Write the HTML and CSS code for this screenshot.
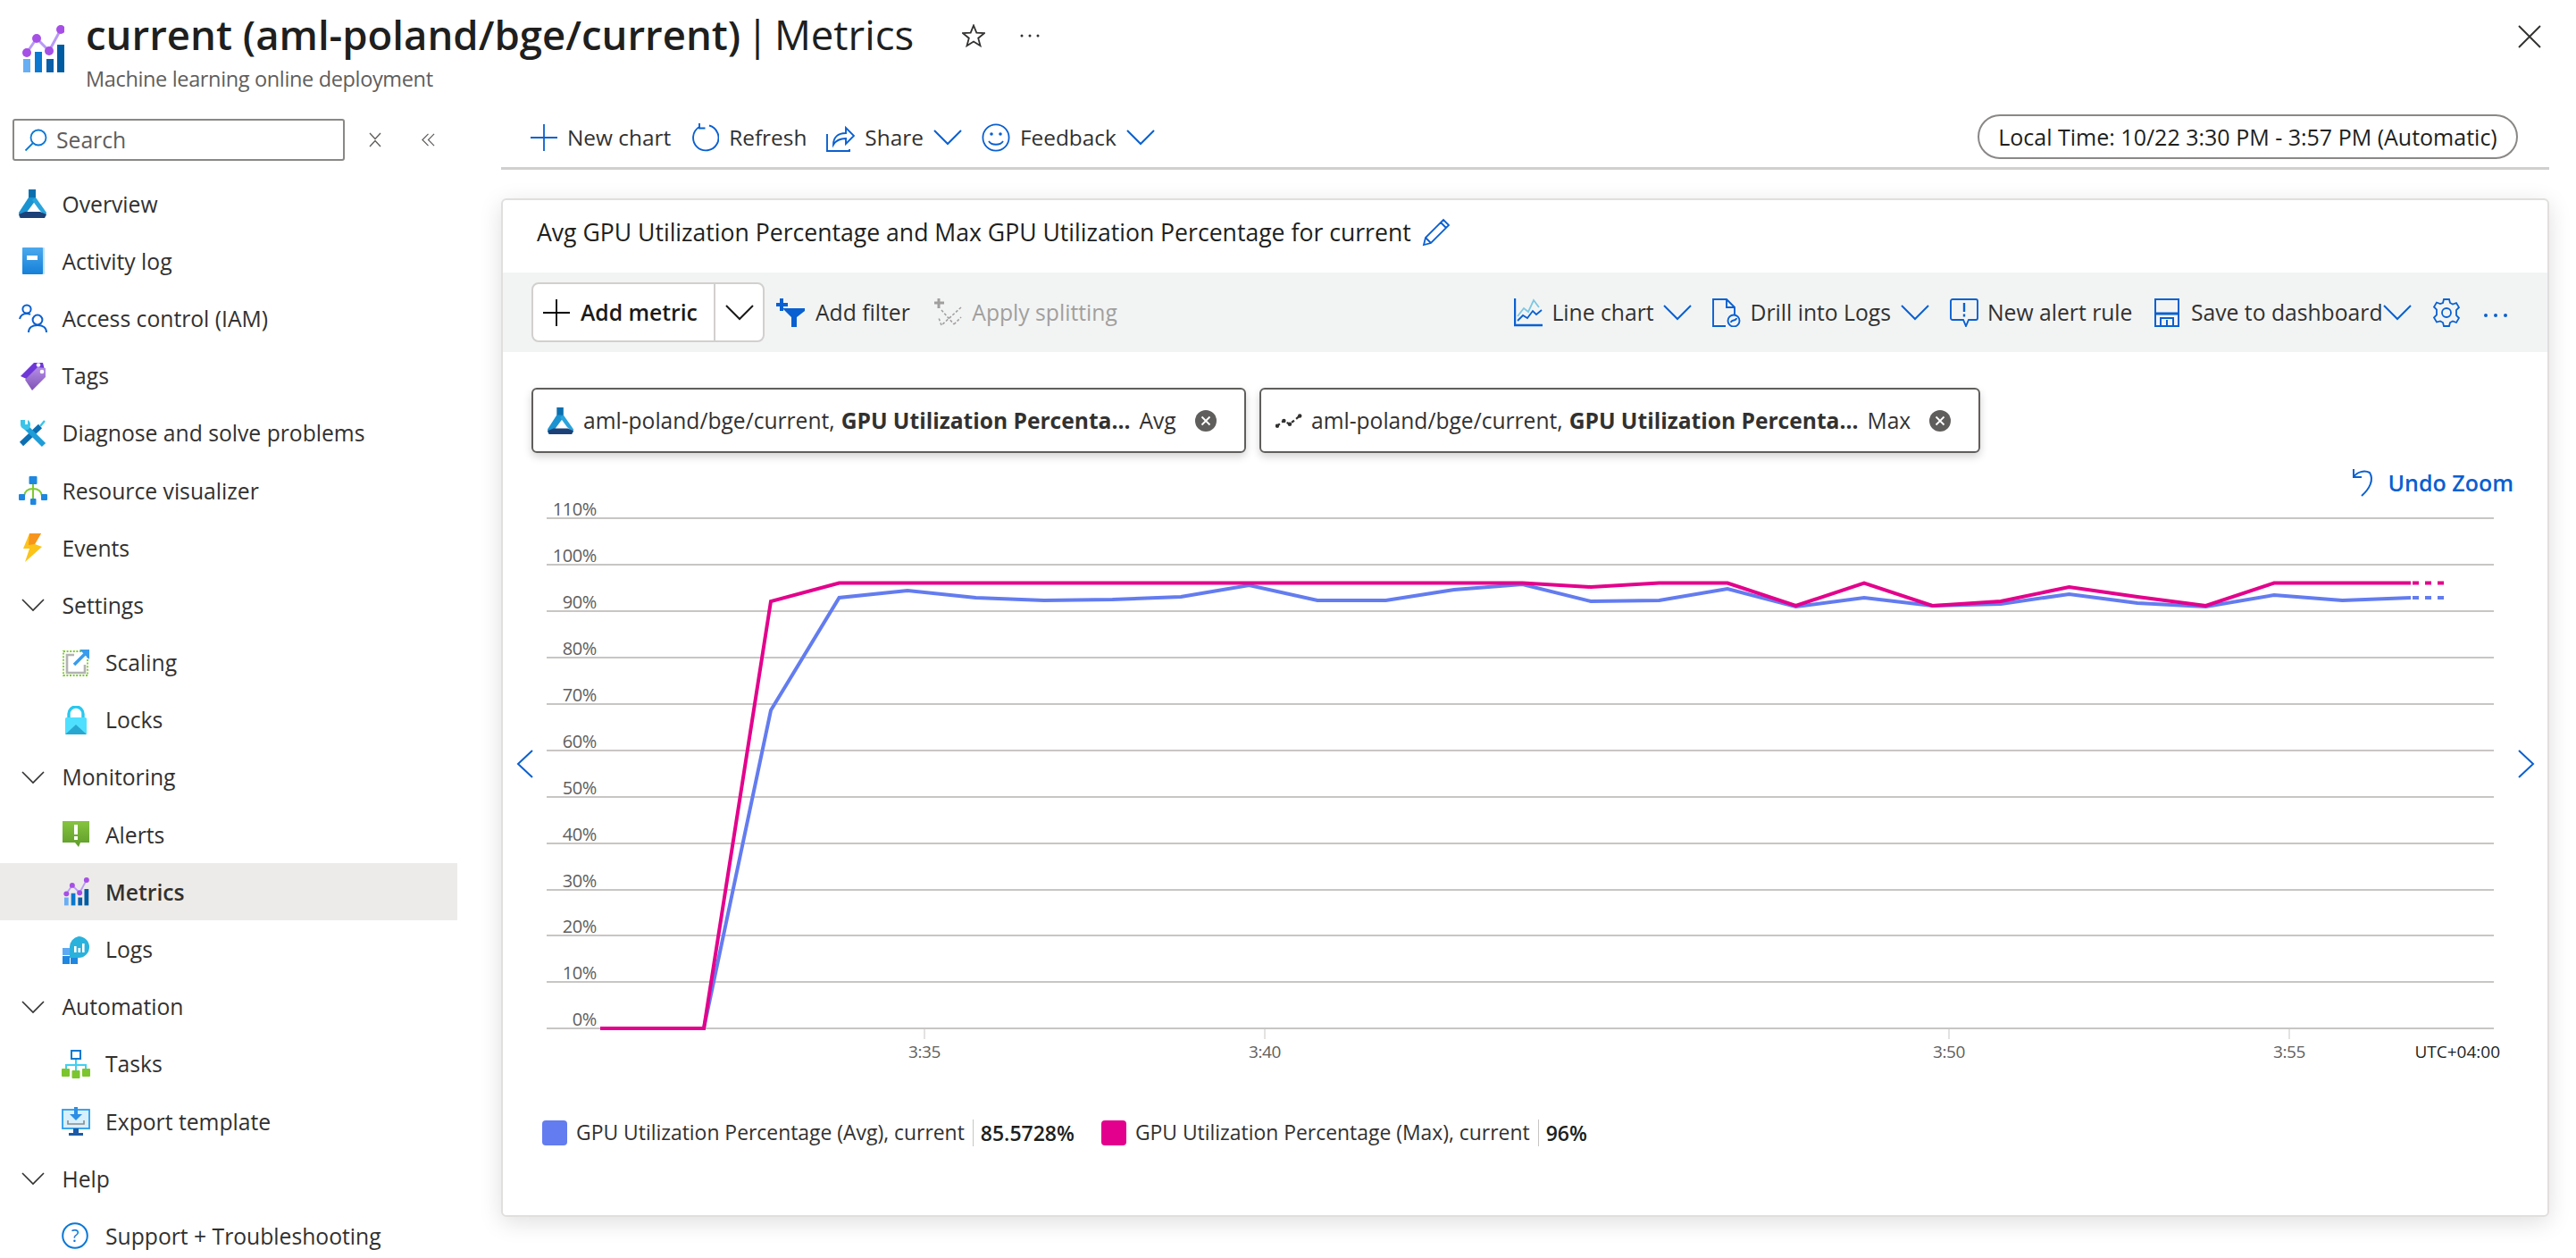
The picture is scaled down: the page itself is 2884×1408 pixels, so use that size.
FILE: index.html
```html
<!DOCTYPE html>
<html lang="en">
<head>
    <meta charset="UTF-8">
    <title>current (aml-poland/bge/current) | Metrics</title>
    <link rel="stylesheet" href="styles.css">
</head>
<body>
    <header class="blade-header">
        <svg class="blade-icon" viewBox="0 0 48 54">
            <rect x="2" y="38" width="8" height="15" fill="#68aef4"/>
            <rect x="15" y="30" width="8" height="23" fill="#0a78d0"/>
            <rect x="28" y="38" width="8" height="15" fill="#0a5fa8"/>
            <rect x="40" y="22" width="8" height="31" fill="#005ba1"/>
            <polyline points="6,31 17,15 31,29 44,5" fill="none" stroke="#b99af8" stroke-width="3"/>
            <circle cx="6" cy="31" r="5" fill="#a64fe6"/>
            <circle cx="17" cy="15" r="5" fill="#a64fe6"/>
            <circle cx="31" cy="29" r="5" fill="#a64fe6"/>
            <circle cx="44" cy="5" r="5" fill="#a64fe6"/>
        </svg>
        <div class="blade-titles">
            <h1 class="blade-title"><strong>current (aml-poland/bge/current)</strong> | Metrics</h1>
            <p class="blade-subtitle">Machine learning online deployment</p>
        </div>
        <svg class="star-icon" viewBox="0 0 26 26"><path d="M13 1.500l3.300 8.200 8.700.5-6.800 5.500 2.300 8.500L13 19.500l-7.500 4.700 2.300-8.500L1 10.200l8.700-.5z" fill="none" stroke="#323130" stroke-width="1.800"/></svg>
        <svg class="header-dots" viewBox="0 0 24 4"><circle cx="3" cy="2" r="1.500" fill="#323130"/><circle cx="12" cy="2" r="1.500" fill="#323130"/><circle cx="21" cy="2" r="1.500" fill="#323130"/></svg>
        <svg class="close-icon" viewBox="0 0 26 26"><path d="M1 1l24 24M25 1L1 25" stroke="#323130" stroke-width="1.900"/></svg>
    </header>

    <div class="blade-body">
        <aside class="sidebar">
            <div class="search-row">
                <div class="search-box">
                    <svg class="search-icon" viewBox="0 0 26 26"><circle cx="16" cy="10" r="8.500" fill="none" stroke="#0a78d6" stroke-width="1.800"/><path d="M10 16L1.500 24.500" stroke="#0a78d6" stroke-width="1.800"/></svg>
                    <span>Search</span>
                </div>
                <svg class="sidebar-tool" viewBox="0 0 14 17"><path d="M1 1l6 6.500L13 1M1 16l6-6.500L13 16" fill="none" stroke="#605e5c" stroke-width="1.400"/></svg>
                <svg class="sidebar-tool collapse" viewBox="0 0 16 18"><path d="M8 2L1 9l7 7M15 2L8 9l7 7" fill="none" stroke="#605e5c" stroke-width="1.300"/></svg>
            </div>

            <nav class="nav-list">
                <a class="nav-item">
                    <svg class="nav-icon" viewBox="0 0 32 32">
                        <rect x="11" y="0" width="8" height="11" fill="#0b6fae"/>
                        <polygon points="11,9 19,9 19,12 8,27 1,32 0,26" fill="#1b93d1"/>
                        <polygon points="19,9 31,26 30,30 23,23 15,12" fill="#2aa4dc"/>
                        <polygon points="10,25 16,18 21,25" fill="#fff"/>
                        <polygon points="7,25 24,25 31,28 29,32 2,32 0,28" fill="#1c4178"/>
                    </svg>
                    Overview
                </a>
                <a class="nav-item">
                    <svg class="nav-icon" viewBox="0 0 32 32">
                        <defs><linearGradient id="bookFill" x1="0" y1="0" x2="0" y2="1"><stop offset="0" stop-color="#4aa9ee"/><stop offset="1" stop-color="#1580d8"/></linearGradient></defs>
                        <rect x="4" y="1" width="25" height="30" rx="1" fill="#bfe0f8"/>
                        <rect x="4" y="1" width="23" height="30" rx="1" fill="url(#bookFill)"/>
                        <rect x="9" y="10" width="12" height="5" fill="#fff"/>
                    </svg>
                    Activity log
                </a>
                <a class="nav-item">
                    <svg class="nav-icon" viewBox="0 0 32 32" fill="none" stroke="#0a60d0" stroke-width="2">
                        <circle cx="9" cy="6" r="4.600"/>
                        <path d="M1 17c1-4 4-6 8-6 2 0 3 .4 4 1"/>
                        <circle cx="21" cy="18" r="5.400"/>
                        <path d="M11 32c0-5 4-8 10-8s10 3 10 8"/>
                    </svg>
                    Access control (IAM)
                </a>
                <a class="nav-item">
                    <svg class="nav-icon" viewBox="0 0 32 32">
                        <defs><linearGradient id="tagFill" x1="0" y1="0" x2="0" y2="1"><stop offset="0" stop-color="#b58ee6"/><stop offset="1" stop-color="#7f51b5"/></linearGradient></defs>
                        <polygon points="2,16 17,1 27,1 29,9 15,22" fill="#6f37d8"/>
                        <polygon points="7,20 21,6 30,7 30,17 15,32" fill="url(#tagFill)"/>
                        <circle cx="22" cy="3.500" r="2.300" fill="#fff"/>
                        <circle cx="26" cy="11" r="2.300" fill="#fff"/>
                    </svg>
                    Tags
                </a>
                <a class="nav-item">
                    <svg class="nav-icon" viewBox="0 0 32 32">
                        <path d="M3 28L24 8" stroke="#0d6fb2" stroke-width="6"/>
                        <path d="M24 8l5-6" stroke="#3bc4ea" stroke-width="2.400"/>
                        <path d="M8 9l20 20" stroke="#1e9dd8" stroke-width="6"/>
                        <path d="M2 1v5c0 4 4 6 8 6 2-1 3-3 3-6 0-2-1-4-3-5v5H7V1z" fill="#3bc4ea"/>
                    </svg>
                    Diagnose and solve problems
                </a>
                <a class="nav-item">
                    <svg class="nav-icon" viewBox="0 0 32 32">
                        <path d="M16 8v18M6 22c1-6 5-8 10-8s9 2 10 8" fill="none" stroke="#7fcb2f" stroke-width="2"/>
                        <rect x="11.500" y="0" width="9" height="9" rx="1" fill="#1f87e0"/>
                        <rect x="0" y="20" width="7" height="7" rx="1" fill="#1f87e0"/>
                        <rect x="25" y="20" width="7" height="7" rx="1" fill="#1f87e0"/>
                        <rect x="13" y="25" width="6.500" height="7" rx="1" fill="#1f87e0"/>
                    </svg>
                    Resource visualizer
                </a>
                <a class="nav-item">
                    <svg class="nav-icon" viewBox="0 0 32 32">
                        <polygon points="12,0 25,0 18,12 26,15 7,32 12,17 5,17" fill="#fcc419"/>
                        <polygon points="12,0 25,0 18,12 11,13" fill="#f7941d"/>
                    </svg>
                    Events
                </a>
                <a class="nav-item group">
                    <svg class="nav-icon" viewBox="0 0 32 32"><path d="M4 10l12 12 12-12" fill="none" stroke="#323130" stroke-width="1.600"/></svg>
                    Settings
                </a>
                <a class="nav-item child">
                    <svg class="nav-icon" viewBox="0 0 32 32">
                        <rect x="2" y="3" width="27" height="27" fill="none" stroke="#7fcb2f" stroke-width="1.800" stroke-dasharray="2 1.600"/>
                        <path d="M14 7H6v20h20v-9" fill="none" stroke="#b3b3b3" stroke-width="2.600"/>
                        <path d="M14 18L28 4" stroke="#3a9bec" stroke-width="3.600"/>
                        <polygon points="20,1 31,1 31,12" fill="#3a9bec"/>
                    </svg>
                    Scaling
                </a>
                <a class="nav-item child">
                    <svg class="nav-icon" viewBox="0 0 32 32">
                        <path d="M8 15V9a8 8 0 0116 0v6" fill="none" stroke="#28c8ef" stroke-width="3.400"/>
                        <rect x="4" y="13" width="24" height="19" rx="1.500" fill="#50e0ff"/>
                        <polygon points="4,32 16,21 28,32" fill="#28a8d0"/>
                    </svg>
                    Locks
                </a>
                <a class="nav-item group">
                    <svg class="nav-icon" viewBox="0 0 32 32"><path d="M4 10l12 12 12-12" fill="none" stroke="#323130" stroke-width="1.600"/></svg>
                    Monitoring
                </a>
                <a class="nav-item child">
                    <svg class="nav-icon" viewBox="0 0 32 32">
                        <defs><linearGradient id="alertFill" x1="0" y1="0" x2="0" y2="1"><stop offset="0" stop-color="#86c440"/><stop offset="1" stop-color="#5e9c2a"/></linearGradient></defs>
                        <polygon points="1,1 31,1 31,25 21,25 19,30 15,25 1,25" fill="url(#alertFill)"/>
                        <rect x="14" y="5" width="4" height="11" fill="#fff"/>
                        <rect x="14" y="18" width="4" height="4" fill="#fff"/>
                    </svg>
                    Alerts
                </a>
                <a class="nav-item child active">
                    <svg class="nav-icon" viewBox="0 0 48 54">
                        <rect x="2" y="38" width="8" height="15" fill="#68aef4"/>
                        <rect x="15" y="30" width="8" height="23" fill="#0a78d0"/>
                        <rect x="28" y="38" width="8" height="15" fill="#0a5fa8"/>
                        <rect x="40" y="22" width="8" height="31" fill="#005ba1"/>
                        <polyline points="6,31 17,15 31,29 44,5" fill="none" stroke="#b99af8" stroke-width="3"/>
                        <circle cx="6" cy="31" r="5" fill="#a64fe6"/>
                        <circle cx="17" cy="15" r="5" fill="#a64fe6"/>
                        <circle cx="31" cy="29" r="5" fill="#a64fe6"/>
                        <circle cx="44" cy="5" r="5" fill="#a64fe6"/>
                    </svg>
                    Metrics
                </a>
                <a class="nav-item child">
                    <svg class="nav-icon" viewBox="0 0 32 32">
                        <rect x="1" y="14" width="8" height="8" fill="#5ea9f3"/>
                        <rect x="1" y="23" width="8" height="9" fill="#1f87e0"/>
                        <rect x="10" y="23" width="8" height="9" fill="#1f87e0"/>
                        <path d="M19 1a12 12 0 010 24H9V13A12 12 0 0119 1z" fill="#2ab2dc"/>
                        <rect x="14" y="12" width="2.600" height="7" fill="#fff"/>
                        <rect x="18.500" y="14" width="2.600" height="5" fill="#fff"/>
                        <rect x="23" y="9" width="2.600" height="10" fill="#fff"/>
                    </svg>
                    Logs
                </a>
                <a class="nav-item group">
                    <svg class="nav-icon" viewBox="0 0 32 32"><path d="M4 10l12 12 12-12" fill="none" stroke="#323130" stroke-width="1.600"/></svg>
                    Automation
                </a>
                <a class="nav-item child">
                    <svg class="nav-icon" viewBox="0 0 32 32">
                        <path d="M16 10v13M5 22v-5h22v5" fill="none" stroke="#40d0f0" stroke-width="2"/>
                        <rect x="11" y="1" width="10" height="9" fill="#fff" stroke="#0a78d0" stroke-width="2"/>
                        <rect x="0" y="21" width="9" height="9" rx="1" fill="#7cc52c"/>
                        <rect x="11.500" y="23" width="9" height="9" rx="1" fill="#7cc52c"/>
                        <rect x="23" y="21" width="9" height="9" rx="1" fill="#7cc52c"/>
                    </svg>
                    Tasks
                </a>
                <a class="nav-item child">
                    <svg class="nav-icon" viewBox="0 0 32 32">
                        <rect x="1" y="3" width="30" height="21" fill="#d8f0fb" stroke="#2b9cea" stroke-width="1.800"/>
                        <path d="M16 0v10" stroke="#2b8fe6" stroke-width="4"/>
                        <polygon points="9,8 23,8 16,15" fill="#2b8fe6"/>
                        <path d="M7 15v4h18v-4" fill="none" stroke="#8a8a8a" stroke-width="1.600"/>
                        <rect x="13" y="24" width="6" height="5" fill="#1c5aa6"/>
                        <rect x="8" y="29" width="16" height="3" fill="#1c5aa6"/>
                    </svg>
                    Export template
                </a>
                <a class="nav-item group">
                    <svg class="nav-icon" viewBox="0 0 32 32"><path d="M4 10l12 12 12-12" fill="none" stroke="#323130" stroke-width="1.600"/></svg>
                    Help
                </a>
                <a class="nav-item child">
                    <svg class="nav-icon" viewBox="0 0 32 32">
                        <circle cx="15" cy="16" r="13.800" fill="none" stroke="#0a78d6" stroke-width="2"/>
                        <text x="15" y="23" text-anchor="middle" class="help-mark">?</text>
                    </svg>
                    Support + Troubleshooting
                </a>
            </nav>
        </aside>

        <main class="main-pane">
            <div class="command-bar">
                <a class="cmd">
                    <svg class="cmd-icon plus" viewBox="0 0 30 30"><path d="M15 0v30M0 15h30" stroke="#0a60d0" stroke-width="1.800"/></svg>
                    New chart
                </a>
                <a class="cmd">
                    <svg class="cmd-icon" viewBox="0 0 32 32" fill="none" stroke="#0a60d0" stroke-width="1.900"><path d="M21 2.500A14.200 14.200 0 1110 4"/><path d="M10 -1v6.500h6.500"/></svg>
                    Refresh
                </a>
                <a class="cmd">
                    <svg class="cmd-icon" viewBox="0 0 32 32" fill="none" stroke="#0a60d0" stroke-width="1.900"><path d="M1 12v19h25v-2"/><path d="M8 24c0-8 5-13 14-13V5l9 9-9 9v-6c-6 0-11 2-14 7z"/></svg>
                    Share
                    <svg class="chevron" viewBox="0 0 32 18"><path d="M1 1l15 15L31 1" fill="none" stroke="#0a60d0" stroke-width="2"/></svg>
                </a>
                <a class="cmd">
                    <svg class="cmd-icon" viewBox="0 0 32 32" fill="none" stroke="#0a60d0" stroke-width="1.800"><circle cx="16" cy="16" r="14.600"/><path d="M8 20c3 5 13 5 16 0"/><circle cx="11" cy="12" r="1.800" fill="#0a60d0" stroke="none"/><circle cx="21" cy="12" r="1.800" fill="#0a60d0" stroke="none"/></svg>
                    Feedback
                    <svg class="chevron" viewBox="0 0 32 18"><path d="M1 1l15 15L31 1" fill="none" stroke="#0a60d0" stroke-width="2"/></svg>
                </a>
                <div class="time-pill">Local Time: 10/22 3:30 PM - 3:57 PM (Automatic)</div>
            </div>

            <section class="chart-card">
                <div class="card-title">
                    Avg GPU Utilization Percentage and Max GPU Utilization Percentage for current
                    <svg class="pencil" viewBox="0 0 32 32" fill="none" stroke="#0a60d0" stroke-width="1.800"><path d="M2 30l2-8L24 2l6 6-20 20zM4 22l6 6M21 5l6 6"/></svg>
                </div>

                <div class="chart-toolbar">
                    <div class="add-metric">
                        <div class="add-metric-main">
                            <svg class="plus-icon" viewBox="0 0 30 30"><path d="M15 0v30M0 15h30" stroke="#000" stroke-width="1.800"/></svg>
                            Add metric
                        </div>
                        <div class="add-metric-drop">
                            <svg class="chevron" viewBox="0 0 32 18"><path d="M1 1l15 15L31 1" fill="none" stroke="#1b1a19" stroke-width="2"/></svg>
                        </div>
                    </div>
                    <a class="tool tool-filter">
                        <svg class="cmd-icon" viewBox="0 0 32 32"><path d="M4 0h4v5h5v4H8v5H4V9H0V5h4z" fill="#0a60d0"/><polygon points="7,11 32,11 32,14 23,21 23,32 17,32 17,21" fill="#0a60d0"/></svg>
                        Add filter
                    </a>
                    <a class="tool tool-disabled">
                        <svg class="cmd-icon" viewBox="0 0 32 32" fill="none" stroke="#a19f9d" stroke-width="1.600" stroke-dasharray="3 2"><path d="M5 0v11M0 5h11" stroke-dasharray="none" stroke-width="3"/><path d="M8 13l14 16M30 10L8 30M8 30l-3-8M22 29l8-8"/></svg>
                        Apply splitting
                    </a>
                    <div class="toolbar-right">
                        <a class="tool">
                            <svg class="cmd-icon" viewBox="0 0 32 32" fill="none" stroke-width="1.800"><path d="M1 0v30h31" stroke="#0a60d0" stroke-width="2.400"/><path d="M4 20l7-9 5 4 6-13 6 8" stroke="#7ec8e3"/><path d="M4 25l6-6 5 3 6-8 4 4 6-5" stroke="#0a60d0"/></svg>
                            Line chart
                            <svg class="chevron" viewBox="0 0 32 18"><path d="M1 1l15 15L31 1" fill="none" stroke="#0a60d0" stroke-width="2"/></svg>
                        </a>
                        <a class="tool">
                            <svg class="cmd-icon" viewBox="0 0 32 32" fill="none" stroke="#0a60d0" stroke-width="1.900"><path d="M15 31H1V1h15l9 9v8M16 1v9h9"/><circle cx="24" cy="25" r="6.500"/><path d="M21 27c0-4 6-1 6-5"/></svg>
                            Drill into Logs
                            <svg class="chevron" viewBox="0 0 32 18"><path d="M1 1l15 15L31 1" fill="none" stroke="#0a60d0" stroke-width="2"/></svg>
                        </a>
                        <a class="tool">
                            <svg class="cmd-icon" viewBox="0 0 32 32" fill="none" stroke="#0a60d0" stroke-width="1.900"><path d="M3 1h26a2 2 0 012 2v19a2 2 0 01-2 2h-8l-3 7-3-7H3a2 2 0 01-2-2V3a2 2 0 012-2z"/><path d="M16 5v10M16 17.500v3" stroke-width="2.400"/></svg>
                            New alert rule
                        </a>
                        <a class="tool">
                            <svg class="cmd-icon" viewBox="0 0 32 32" fill="none" stroke="#0a60d0" stroke-width="2"><path d="M3 1h26v30H3z"/><path d="M3 17h26" stroke-width="3"/><path d="M9 31V22h14v9M16 24v7"/></svg>
                            Save to dashboard
                            <svg class="chevron tight" viewBox="0 0 32 18"><path d="M1 1l15 15L31 1" fill="none" stroke="#0a60d0" stroke-width="2"/></svg>
                        </a>
                        <svg class="cmd-icon" viewBox="0 0 32 32" fill="none" stroke="#0a60d0" stroke-width="1.800"><circle cx="16" cy="16" r="5"/><path d="M13 1h6l1 4 3 1.500 4-1.500 3 5-3 3v6l3 3-3 5-4-1.500-3 1.500-1 4h-6l-1-4-3-1.500L5 26.500l-3-5 3-3v-6l-3-3 3-5 4 1.500L12 5z"/></svg>
                        <svg class="toolbar-dots" viewBox="0 0 28 6"><circle cx="3" cy="3" r="2" fill="#0a60d0"/><circle cx="14" cy="3" r="2" fill="#0a60d0"/><circle cx="25" cy="3" r="2" fill="#0a60d0"/></svg>
                    </div>
                </div>

                <div class="metric-pills">
                    <div class="pill pill-avg">
                        <svg class="pill-icon" viewBox="0 0 32 32">
                            <rect x="11" y="0" width="8" height="11" fill="#0b6fae"/>
                            <polygon points="11,9 19,9 19,12 8,27 1,32 0,26" fill="#1b93d1"/>
                            <polygon points="19,9 31,26 30,30 23,23 15,12" fill="#2aa4dc"/>
                            <polygon points="10,25 16,18 21,25" fill="#fff"/>
                            <polygon points="7,25 24,25 31,28 29,32 2,32 0,28" fill="#1c4178"/>
                        </svg>
                        <span class="pill-res">aml-poland/bge/current,</span>
                        <strong class="pill-metric">GPU Utilization Percenta...</strong>
                        <span class="pill-agg">Avg</span>
                        <svg class="pill-close" viewBox="0 0 24 24"><circle cx="12" cy="12" r="12" fill="#605e5c"/><path d="M7.500 7.500l9 9M16.500 7.500l-9 9" stroke="#fff" stroke-width="1.800"/></svg>
                    </div>
                    <div class="pill pill-max">
                        <svg class="pill-icon" viewBox="0 0 32 32"><path d="M2 22l8-6 7 4 12-10" fill="none" stroke="#323130" stroke-width="2.400" stroke-dasharray="4 3"/><circle cx="2" cy="22" r="2.400" fill="#323130"/><circle cx="10" cy="16" r="2.400" fill="#323130"/><circle cx="17" cy="20" r="2.400" fill="#323130"/><circle cx="29" cy="10" r="2.400" fill="#323130"/></svg>
                        <span class="pill-res">aml-poland/bge/current,</span>
                        <strong class="pill-metric">GPU Utilization Percenta...</strong>
                        <span class="pill-agg">Max</span>
                        <svg class="pill-close" viewBox="0 0 24 24"><circle cx="12" cy="12" r="12" fill="#605e5c"/><path d="M7.500 7.500l9 9M16.500 7.500l-9 9" stroke="#fff" stroke-width="1.800"/></svg>
                    </div>
                </div>

                <div class="chart-actions">
                    <a class="undo-zoom">
                        <svg class="undo-icon" viewBox="0 0 26 32" fill="none" stroke="#0a60d0" stroke-width="2"><path d="M2 1v9h9M2 10c4-6 12-8 18-5 5 8 0 18-9 26"/></svg>
                        Undo Zoom
                    </a>
                </div>

                <svg class="chart-plot" viewBox="564 555 2288 640">
                    <g class="grid">
                        <path d="M613 580H2793M613 632H2793M613 684H2793M613 736H2793M613 788H2793M613 840H2793M613 892H2793M613 944H2793M613 996H2793M613 1047H2793M613 1099H2793M613 1151H2793"/>
                        <path class="tick" d="M1036 1152v11M1417 1152v11M2183 1152v11M2564 1152v11"/>
                    </g>
                    <g class="y-labels">
                        <text x="669" y="577">110%</text>
                        <text x="669" y="629">100%</text>
                        <text x="669" y="681">90%</text>
                        <text x="669" y="733">80%</text>
                        <text x="669" y="785">70%</text>
                        <text x="669" y="837">60%</text>
                        <text x="669" y="889">50%</text>
                        <text x="669" y="941">40%</text>
                        <text x="669" y="993">30%</text>
                        <text x="669" y="1044">20%</text>
                        <text x="669" y="1096">10%</text>
                        <text x="669" y="1148">0%</text>
                    </g>
                    <g class="x-labels">
                        <text x="1036" y="1184">3:35</text>
                        <text x="1417" y="1184">3:40</text>
                        <text x="2183" y="1184">3:50</text>
                        <text x="2564" y="1184">3:55</text>
                    </g>
                    <text class="tz-label" x="2800" y="1184">UTC+04:00</text>
                    <polyline class="series avg" points="673,1151 789,1151 864,795 940.500,669 1017,661 1093.500,669 1170,672 1246.500,671 1323,668 1399.500,655 1476,672 1552.500,672 1629,660 1705.500,654 1782,673 1858.500,672 1935,659 2011.500,679 2088,669 2164.500,678 2241,676 2317.500,665 2394,675 2470.500,679 2547,666 2623.500,672 2700,669"/>
                    <path class="series avg dashed" d="M2702 669H2741"/>
                    <polyline class="series max" points="673,1151 789,1151 864,673 940.500,652.500 1705.500,652.500 1782,657 1858.500,652.500 1935,652.500 2011.500,678 2088,652.500 2164.500,678 2241,673 2317.500,657 2394,668 2470.500,678 2547,652.500 2700,652.500"/>
                    <path class="series max dashed" d="M2702 652.500H2741"/>
                    <path class="chart-nav" d="M597 840l-16 15 16 15M2821 840l16 15-16 15"/>
                </svg>

                <div class="legend">
                    <div class="legend-item">
                        <span class="swatch swatch-avg"></span>
                        <span class="legend-name">GPU Utilization Percentage (Avg), current</span>
                        <strong class="legend-value">85.5728%</strong>
                    </div>
                    <div class="legend-item">
                        <span class="swatch swatch-max"></span>
                        <span class="legend-name">GPU Utilization Percentage (Max), current</span>
                        <strong class="legend-value">96%</strong>
                    </div>
                </div>
            </section>
        </main>
    </div>
</body>
</html>
```

FILE: styles.css
```css
* {
    box-sizing: border-box;
}

html, body {
    margin: 0;
    height: 100%;
}

body {
    width: 2884px;
    height: 1408px;
    overflow: hidden;
    background: white;
    color: #323130;
    font-family: "Open Sans", "Noto Sans", sans-serif;
    font-size: 24.7px;
}

svg {
    flex-shrink: 0;
    display: block;
}

/* header */

.blade-header {
    height: 118px;
    display: flex;
    align-items: flex-start;
    padding: 28px 39px 0 24px;
}

.blade-icon {
    width: 48px;
    height: 54px;
    margin-right: 24px;
}

.blade-titles {
    margin-top: -21px;
}

.blade-title {
    margin: 0;
    font-size: 45.5px;
    font-weight: 400;
    line-height: 62px;
    word-spacing: -5.5px;
    color: #201f1e;
    white-space: nowrap;
}

.blade-title strong {
    font-weight: 600;
    word-spacing: 0;
}

.blade-subtitle {
    margin: 2px 0 0;
    font-size: 23.5px;
    line-height: 34px;
    letter-spacing: -0.35px;
    color: #605e5c;
}

.star-icon {
    width: 26px;
    height: 26px;
    margin: -1px 0 0 54px;
}

.header-dots {
    width: 24px;
    height: 4px;
    margin: 10px 0 0 38px;
}

.close-icon {
    width: 26px;
    height: 26px;
    margin: 0 0 0 auto;
}

/* sidebar */

.blade-body {
    display: flex;
}

.sidebar {
    width: 512px;
    flex-shrink: 0;
}

.search-row {
    display: flex;
    align-items: center;
    height: 47px;
    margin: 15px 0 16px 14px;
}

.search-box {
    width: 372px;
    height: 47px;
    display: flex;
    align-items: center;
    gap: 10px;
    padding-left: 11px;
    border: 2px solid #8a8886;
    border-radius: 3px;
    color: #605e5c;
}

.search-icon {
    width: 26px;
    height: 26px;
}

.sidebar-tool {
    width: 14px;
    height: 17px;
    margin-left: 27px;
}

.sidebar-tool.collapse {
    width: 15px;
    margin-left: 45px;
}

.nav-item {
    height: 64.2px;
    display: flex;
    align-items: center;
    gap: 16.5px;
    padding-left: 21px;
    color: #323130;
    white-space: nowrap;
}

.nav-item.child {
    padding-left: 69px;
    gap: 17px;
}

.nav-item.active {
    background: #edebe9;
    font-weight: 600;
}

.nav-icon {
    width: 32px;
    height: 32px;
}

.help-mark {
    font-family: "Open Sans", sans-serif;
    font-size: 20px;
    fill: #0a78d6;
}

/* command bar */

.main-pane {
    width: 2293px;
    margin-left: 49px;
}

.command-bar {
    height: 72px;
    display: flex;
    align-items: center;
    padding: 2px 35px 0 33px;
    border-bottom: 3px solid #d2d0ce;
    gap: 22px;
    font-size: 24.4px;
}

.cmd {
    display: flex;
    align-items: center;
    gap: 11px;
    white-space: nowrap;
}

.cmd-icon {
    width: 32px;
    height: 32px;
}

.cmd-icon.plus,
.plus-icon {
    width: 30px;
    height: 30px;
}

.chevron {
    width: 32px;
    height: 18px;
}

.time-pill {
    margin: -2px 0 0 auto;
    width: 605px;
    height: 50px;
    line-height: 46px;
    text-align: center;
    border: 2px solid #8a8886;
    border-radius: 25px;
    color: #201f1e;
    font-size: 25px;
    white-space: nowrap;
}

/* chart card */

.chart-card {
    height: 1140px;
    margin-top: 32px;
    border: 2px solid #e1dfdd;
    border-radius: 6px;
    box-shadow: 0 6px 26px rgba(0,0,0,0.13);
    background: white;
}

.card-title {
    height: 81px;
    display: flex;
    align-items: center;
    gap: 12px;
    padding: 0 0 9px 38px;
    color: #201f1e;
    font-size: 26.6px;
}

.pencil {
    width: 32px;
    height: 32px;
}

.chart-toolbar {
    height: 89px;
    display: flex;
    align-items: center;
    padding-left: 32px;
    background: #f2f4f4;
}

.add-metric {
    width: 261px;
    height: 67px;
    display: flex;
    background: white;
    border: 2px solid #d2d0ce;
    border-radius: 8px;
}

.add-metric-main {
    width: 204px;
    display: flex;
    align-items: center;
    gap: 12px;
    padding-left: 11px;
    border-right: 2px solid #d2d0ce;
    color: #1b1a19;
    font-weight: 600;
    white-space: nowrap;
}

.add-metric-drop {
    flex: 1;
    display: flex;
    align-items: center;
    justify-content: center;
}

.tool {
    display: flex;
    align-items: center;
    gap: 10.5px;
    white-space: nowrap;
}

.tool-filter {
    margin-left: 13px;
    gap: 12px;
}

.tool-disabled {
    margin-left: 27px;
    color: #a19f9d;
}

.toolbar-right {
    display: flex;
    align-items: center;
    gap: 23px;
    margin-left: auto;
    padding-right: 44px;
}

.toolbar-right .chevron.tight {
    margin-left: -10px;
}

.toolbar-dots {
    width: 28px;
    height: 6px;
    margin: 6px 0 0 2px;
}

.metric-pills {
    display: flex;
    gap: 15px;
    padding: 40px 0 0 32px;
}

.pill {
    height: 73px;
    display: flex;
    align-items: center;
    padding-left: 16px;
    border: 2px solid #605e5c;
    border-radius: 6px;
    box-shadow: 0 4px 10px rgba(0,0,0,0.18);
    font-size: 24.6px;
    white-space: nowrap;
}

.pill-avg {
    width: 800px;
}

.pill-max {
    width: 807px;
}

.pill-icon {
    width: 30px;
    height: 32px;
    margin-right: 10px;
}

.pill-metric {
    margin-left: 7px;
    font-weight: 700;
}

.pill-agg {
    margin-left: 10px;
}

.pill-close {
    width: 24px;
    height: 24px;
    margin-left: auto;
    margin-right: 31px;
}

.chart-actions {
    display: flex;
    justify-content: flex-end;
    height: 48px;
    padding: 17px 38px 0 0;
}

.undo-zoom {
    display: flex;
    align-items: center;
    gap: 14px;
    height: 31px;
    color: #0a60d0;
    font-size: 25px;
    font-weight: 600;
    white-space: nowrap;
}

.undo-icon {
    width: 26px;
    height: 32px;
}

.chart-plot {
    width: 2288px;
    height: 640px;
}

.grid path {
    fill: none;
    stroke: #c8c6c4;
    stroke-width: 2;
}

.grid .tick {
    stroke-width: 1;
}

.y-labels text,
.x-labels text {
    font-size: 20px;
    letter-spacing: -0.4px;
    fill: #605e5c;
}

.y-labels text {
    text-anchor: end;
}

.x-labels text {
    text-anchor: middle;
    font-size: 19px;
}

.tz-label {
    font-size: 19px;
    fill: #201f1e;
    text-anchor: end;
}

.series {
    fill: none;
    stroke-width: 4;
    stroke-linejoin: miter;
}

.series.avg {
    stroke: #637cef;
}

.series.max {
    stroke: #e3008c;
}

.series.dashed {
    stroke-dasharray: 7 7;
}

.chart-nav {
    fill: none;
    stroke: #0a60d0;
    stroke-width: 2;
}

.legend {
    display: flex;
    gap: 30px;
    margin-top: 57px;
    padding-left: 44px;
}

.legend-item {
    display: flex;
    align-items: center;
    white-space: nowrap;
}

.swatch {
    width: 28px;
    height: 28px;
    border-radius: 4px;
    margin-right: 10px;
}

.swatch-avg {
    background: #637cef;
}

.swatch-max {
    background: #e3008c;
}

.legend-name {
    font-size: 22.9px;
    padding-right: 9px;
    border-right: 1px solid #c8c6c4;
    line-height: 30px;
}

.legend-value {
    font-size: 23px;
    font-weight: 600;
    margin-left: 8px;
    color: #201f1e;
}
```
